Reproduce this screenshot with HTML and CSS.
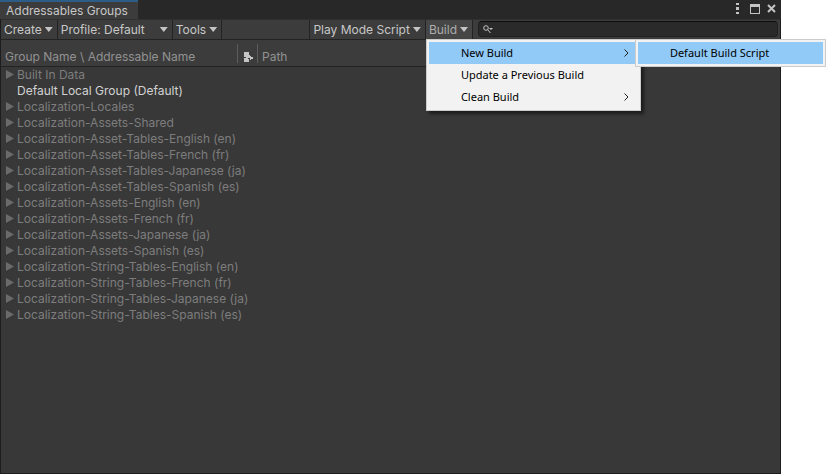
FILE: index.html
```
<!DOCTYPE html>
<html lang="en">
<head>
<meta charset="utf-8">
<title>Addressables Groups</title>
<link rel="stylesheet" href="styles.css">
</head>
<body>
<main class="window">
  <header class="titlebar">
    <h1 class="tab">Addressables Groups</h1>
    <div class="controls">
      <button class="control" aria-label="Options"><svg width="3" height="11" viewBox="0 0 3 11"><path d="M0 0h3v2H0zM0 4h3v3H0zM0 9h3v2H0z"/></svg></button>
      <button class="control" aria-label="Maximize"><svg width="10" height="10" viewBox="0 0 10 10"><path fill-rule="evenodd" d="M0 0h10v10H0zM1 3v6h8V3z"/></svg></button>
      <button class="control" aria-label="Close"><svg width="9" height="9" viewBox="0 0 9 9"><path class="stroke" d="M1 1l7 7M8 1L1 8"/></svg></button>
    </div>
  </header>
  <nav class="toolbar">
    <button class="tool">Create<span class="caret"></span></button>
    <button class="tool profile">Profile: Default<span class="caret"></span></button>
    <button class="tool">Tools<span class="caret"></span></button>
    <span class="spacer"></span>
    <button class="tool mode">Play Mode Script<span class="caret"></span></button>
    <div class="dropdown">
      <button class="tool active" aria-expanded="true">Build<span class="caret"></span></button>
      <div class="menu" role="menu">
        <button class="item selected" role="menuitem">New Build<svg class="chevron" width="5" height="8" viewBox="0 0 5 8"><path d="M.5 .5L4 4L.5 7.500"/></svg></button>
        <button class="item" role="menuitem">Update a Previous Build</button>
        <button class="item" role="menuitem">Clean Build<svg class="chevron" width="5" height="8" viewBox="0 0 5 8"><path d="M.5 .5L4 4L.5 7.500"/></svg></button>
        <div class="menu submenu" role="menu">
          <button class="item selected" role="menuitem">Default Build Script</button>
        </div>
      </div>
    </div>
    <label class="search">
      <svg width="10" height="9" viewBox="0 0 10 9"><circle cx="3" cy="3" r="2.300"/><path class="handle" d="M4.700 4.700L7.500 8"/><path class="arrow" d="M6 3h4L8 5z"/></svg>
      <input type="text" aria-label="Search groups">
    </label>
  </nav>
  <table class="groups">
    <colgroup><col class="col-name"><col class="col-icon"><col></colgroup>
    <thead>
      <tr>
        <th><div class="head">Group Name \ Addressable Name</div></th>
        <th><div class="head icon"><svg width="9" height="10" viewBox="0 0 9 10"><path d="M0 0h5v3h1v1h1v1h2v2H7v1H6V6H4v1h1v3H0V6h2V5H0z"/></svg></div></th>
        <th><div class="head last">Path</div></th>
      </tr>
    </thead>
    <tbody>
      <tr><td colspan="3"><span class="fold"></span>Built In Data</td></tr>
      <tr class="default"><td colspan="3"><span class="fold"></span>Default Local Group (Default)</td></tr>
      <tr><td colspan="3"><span class="fold"></span>Localization-Locales</td></tr>
      <tr><td colspan="3"><span class="fold"></span>Localization-Assets-Shared</td></tr>
      <tr><td colspan="3"><span class="fold"></span>Localization-Asset-Tables-English (en)</td></tr>
      <tr><td colspan="3"><span class="fold"></span>Localization-Asset-Tables-French (fr)</td></tr>
      <tr><td colspan="3"><span class="fold"></span>Localization-Asset-Tables-Japanese (ja)</td></tr>
      <tr><td colspan="3"><span class="fold"></span>Localization-Asset-Tables-Spanish (es)</td></tr>
      <tr><td colspan="3"><span class="fold"></span>Localization-Assets-English (en)</td></tr>
      <tr><td colspan="3"><span class="fold"></span>Localization-Assets-French (fr)</td></tr>
      <tr><td colspan="3"><span class="fold"></span>Localization-Assets-Japanese (ja)</td></tr>
      <tr><td colspan="3"><span class="fold"></span>Localization-Assets-Spanish (es)</td></tr>
      <tr><td colspan="3"><span class="fold"></span>Localization-String-Tables-English (en)</td></tr>
      <tr><td colspan="3"><span class="fold"></span>Localization-String-Tables-French (fr)</td></tr>
      <tr><td colspan="3"><span class="fold"></span>Localization-String-Tables-Japanese (ja)</td></tr>
      <tr><td colspan="3"><span class="fold"></span>Localization-String-Tables-Spanish (es)</td></tr>
    </tbody>
  </table>
</main>
</body>
</html>
```
FILE: styles.css
```
* { box-sizing: border-box; }
body {
  margin: 0;
  padding-right: 45px;
  background: #fff;
  font: 12px/16px Inter, sans-serif;
  color: #c8c8c8;
}
button, input {
  font: inherit;
  color: inherit;
  background: none;
  border: 0;
  padding: 0;
  margin: 0;
}
svg { display: block; flex: none; }
.window {
  min-height: 100vh;
  background: #383838;
  border: 1px solid #1d1d1d;
  border-top: 0;
}
.titlebar {
  display: flex;
  justify-content: space-between;
  height: 19px;
  margin: 0 -1px;
  background: #282828;
}
.tab {
  width: 138px;
  margin: 0;
  padding: 1px 6px 0;
  border-top: 2px solid #2c5d87;
  background: #3c3c3c;
  font-size: 12px;
  font-weight: 400;
  white-space: nowrap;
}
.controls {
  display: flex;
  align-items: center;
  gap: 7px;
  padding: 0 5px 2px 0;
}
.control { fill: #c4c4c4; }
.control:first-child { margin-right: 4px; }
.stroke { stroke: #c4c4c4; stroke-width: 2; }
.toolbar {
  display: flex;
  height: 21px;
  background: #3c3c3c;
  border-top: 1px solid #303030;
  border-bottom: 1px solid #232323;
}
.tool {
  display: flex;
  align-items: center;
  justify-content: space-between;
  gap: 3px;
  height: 19px;
  padding: 0 4px 0 3px;
  border-right: 1px solid #232323;
  white-space: nowrap;
}
.profile { width: 115px; }
.mode { border-left: 1px solid #232323; }
.active { background: #464646; color: #adadad; }
.spacer { flex: 1; }
.caret {
  width: 8px;
  height: 5px;
  background: #c4c4c4;
  clip-path: polygon(0 0, 100% 0, 50% 100%);
}
.dropdown { position: relative; }
.menu {
  position: absolute;
  z-index: 1;
  top: 19px;
  left: 0;
  width: 215px;
  padding: 2px;
  background: #f2f2f2;
  border: 1px solid #ccc;
  box-shadow: 3px 3px 3px rgba(0, 0, 0, .5);
}
.submenu {
  top: -1px;
  left: 208px;
  width: 191px;
  box-shadow: none;
}
.item {
  display: flex;
  align-items: center;
  justify-content: space-between;
  width: 100%;
  height: 22px;
  padding: 0 9px 0 32px;
  font-family: "Noto Sans", sans-serif;
  font-size: 11px;
  color: #000;
  white-space: nowrap;
}
.selected { background: #91c9f7; }
.chevron { fill: none; stroke: #222; }
.search {
  display: flex;
  align-items: center;
  gap: 4px;
  width: 300px;
  height: 16px;
  margin: 1px 2px 0 5px;
  padding: 0 4px;
  background: #2a2a2a;
  border: 1px solid #212121;
  border-top-color: #0d0d0d;
  border-radius: 4px;
}
.search circle { fill: none; stroke: #c4c4c4; }
.handle { stroke: #c4c4c4; }
.arrow { fill: #c4c4c4; }
.search input { flex: 1; min-width: 0; height: 14px; outline: 0; }
.groups {
  width: 100%;
  table-layout: fixed;
  border-collapse: separate;
  border-spacing: 0;
  color: #7d7d7d;
}
.col-name { width: 237px; }
.col-icon { width: 20px; }
.groups th {
  height: 27px;
  padding: 4px 0 3px;
  background: #3c3c3c;
  border-bottom: 1px solid #232323;
  font-weight: 400;
  text-align: left;
  color: #929292;
}
.head {
  height: 19px;
  padding: 4px 0 0 4px;
  line-height: 18px;
  border-right: 1px solid #5c5c5c;
}
.icon { padding: 8px 0 0 6px; fill: #c4c4c4; }
.last { border: 0; }
.groups td { height: 16px; padding: 0 0 0 5px; line-height: 16px; white-space: nowrap; }
.groups .default { color: #d2d2d2; }
.fold {
  display: inline-block;
  width: 8px;
  height: 9px;
  margin-right: 3px;
  background: #6b6b6b;
  clip-path: polygon(0 0, 100% 50%, 0 100%);
}
.default .fold { visibility: hidden; }
```
